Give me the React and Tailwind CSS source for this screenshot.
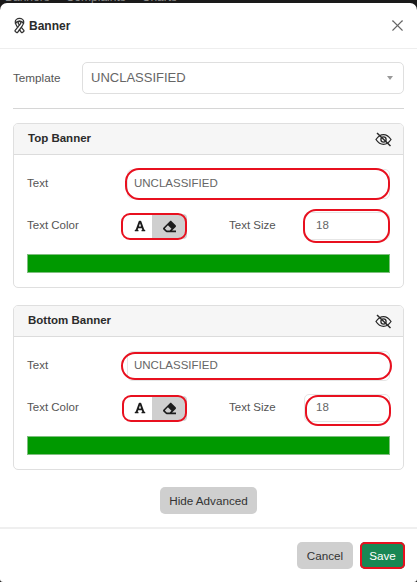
import React from 'react';
import { Ribbon, X } from 'lucide-react';
import { FaFont, FaEraser } from 'react-icons/fa';

// Red marker outline that sits over a control
const RedRing = ({ className }) => (
  <div className={`absolute pointer-events-none border-2 border-[#e8101f] ${className}`} />
);

const EyeSlash = () => (
  <svg width="17" height="15" viewBox="0 0 17 15" fill="none" stroke="#2a2a2a" strokeWidth="1.3">
    <path d="M1 7.5 C3.5 3.8 6 2.6 8.5 2.6 C11 2.6 13.5 3.8 16 7.5 C13.5 11.2 11 12.4 8.5 12.4 C6 12.4 3.5 11.2 1 7.5 Z" />
    <circle cx="8.5" cy="7.5" r="2.6" />
    <path d="M2 1 L15.5 14" strokeWidth="1.5" />
  </svg>
);

const BannerCard = ({ title, textRing, colorRing, sizeRing }) => (
  <section className="border border-[#dfdfdf] rounded-[5px] h-[165px] overflow-hidden">
    <div className="h-[31px] bg-[#f6f6f6] border-b border-[#dcdcdc] pl-[14px] pr-[11px] flex items-center justify-between">
      <span className="text-[11.5px] font-bold text-[#2b2b2b]">{title}</span>
      <EyeSlash />
    </div>
    <div className="px-[13px] pt-[14px]">
      <div className="flex items-center h-[30px]">
        <span className="w-[100px] text-[11.5px] text-[#555]">Text</span>
        <div className="relative flex-1 h-[30px] flex items-center pl-[6px] text-[11.5px] text-[#666] border border-[#e6e6e6] rounded-[5px]">
          UNCLASSIFIED
          <RedRing className={textRing} />
        </div>
      </div>
      <div className="flex items-center h-[28px] mt-[13px]">
        <span className="w-[100px] text-[11.5px] text-[#555]">Text Color</span>
        <div className="relative flex h-[25px] w-[60px]">
          <div className="w-[25px] flex items-center justify-center text-[#1c1c1c]">
            <FaFont size={12} />
          </div>
          <div className="w-[35px] bg-[#cfcfcf] flex items-center justify-center text-[#1c1c1c] rounded-r-[4px]">
            <FaEraser size={13} />
          </div>
          <RedRing className={colorRing} />
        </div>
        <span className="ml-[42px] w-[75px] text-[11.5px] text-[#555]">Text Size</span>
        <div className="relative flex-1 h-[28px] flex items-center pl-[11px] text-[11.5px] text-[#666] border border-[#e6e6e6] rounded-[5px]">
          18
          <RedRing className={sizeRing} />
        </div>
      </div>
      <div className="h-[19px] mt-[14px] bg-[#009900] border border-[#7fbf7f]" />
    </div>
  </section>
);

export default function App() {
  return (
    <div className="w-[417px] h-[582px] bg-[#1a1a1a] overflow-hidden font-['Liberation_Sans',Arial,sans-serif]">
      <div className="h-[3px] overflow-hidden flex items-end gap-[16px] pl-[5px] text-[12px] leading-[12px] text-[#8a8a8a] whitespace-nowrap">
        <span>Banners</span>
        <span>Complaints</span>
        <span>Charts</span>
      </div>
      <div className="h-[579px] bg-white rounded-t-[7px] rounded-b-[3px]">
        <header className="h-[46px] border-b border-[#eeeeee] pl-[11px] pr-[10px] flex items-center justify-between">
          <div className="flex items-center gap-[1px]">
            <Ribbon size={17} strokeWidth={1.8} className="text-[#333]" />
            <span className="text-[12px] font-bold text-[#2b2b2b]">Banner</span>
          </div>
          <X size={19} strokeWidth={1.4} className="text-[#666]" />
        </header>

        <div className="px-[13px]">
          <div className="flex items-center mt-[13px]">
            <span className="w-[69px] text-[11.7px] text-[#555]">Template</span>
            <div className="flex-1 h-[32px] border border-[#dfdfdf] rounded-[5px] pl-[8px] pr-[10px] flex items-center justify-between text-[13px] text-[#666]">
              UNCLASSIFIED
              <span className="w-0 h-0 border-x-[3.5px] border-x-transparent border-t-[4px] border-t-[#999]" />
            </div>
          </div>
          <hr className="mt-[14px] border-[#d6d6d6]" />

          <div className="mt-[14px] flex flex-col gap-[17px]">
            <BannerCard
              title="Top Banner"
              textRing="-left-[3px] -top-[2px] -right-[1px] -bottom-[2px] rounded-[14px]"
              colorRing="-left-[6px] -top-[1px] right-0 -bottom-[1px] rounded-[9px]"
              sizeRing="-left-[2px] -top-[4px] -right-[1px] -bottom-[4px] rounded-[13px]"
            />
            <BannerCard
              title="Bottom Banner"
              textRing="-left-[7px] top-0 -right-[3px] bottom-0 rounded-[14px]"
              colorRing="-left-[5px] -top-[1px] right-0 -bottom-[1px] rounded-[9px]"
              sizeRing="left-0 top-0 -right-[2px] -bottom-[5px] rounded-[13px]"
            />
          </div>

          <div className="flex justify-center mt-[17px]">
            <button className="w-[97px] h-[27px] rounded-[5px] bg-[#cfcfcf] text-[11.7px] text-[#333]">Hide Advanced</button>
          </div>
        </div>

        <footer className="mt-[13px] h-[52px] border-t-2 border-[#efefef] pr-[12px] flex items-start justify-end gap-[7px] pt-[13px]">
          <button className="w-[56px] h-[27px] rounded-[5px] bg-[#cfcfcf] text-[11.7px] text-[#333]">Cancel</button>
          <div className="relative">
            <button className="block w-[45px] h-[27px] rounded-[5px] bg-[#198754] text-[11.7px] text-white">Save</button>
            <RedRing className="inset-0 rounded-[5px]" />
          </div>
        </footer>
      </div>
    </div>
  );
}
